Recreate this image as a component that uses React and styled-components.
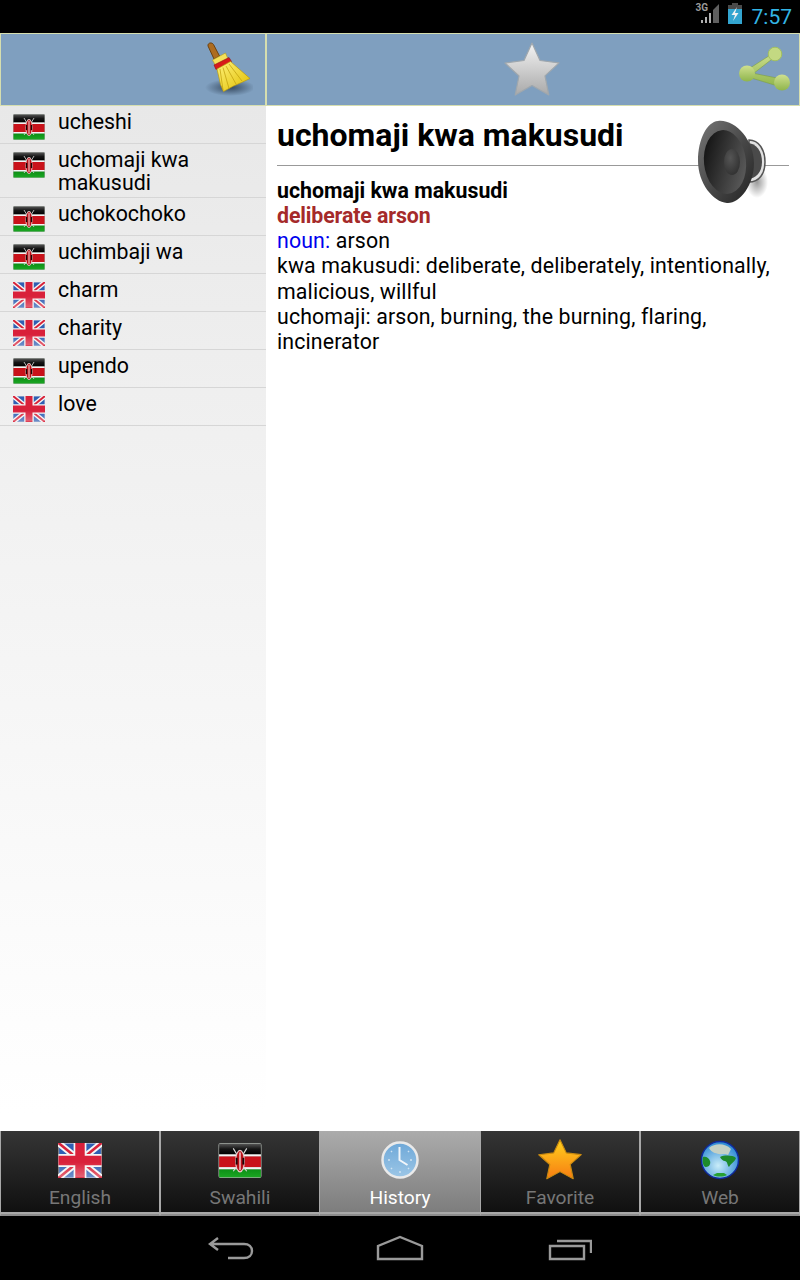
import React from "react";
import styled, { createGlobalStyle } from "styled-components";

const Global = createGlobalStyle`
  html, body { margin: 0; padding: 0; background: #fff; }
  * { box-sizing: border-box; }
`;

const Page = styled.div`
  width: 800px;
  height: 1280px;
  display: flex;
  flex-direction: column;
  overflow: hidden;
  font-family: Roboto, "Liberation Sans", sans-serif;
  color: #000;
  background: #fff;
`;

const StatusBar = styled.div`
  height: 33px;
  flex: none;
  background: #000;
  display: flex;
  justify-content: flex-end;
  align-items: center;
  padding-right: 8px;
`;
const Clock = styled.span`
  color: #33b5e5;
  font-size: 21px;
  line-height: 33px;
  margin-left: 9px;
  padding-top: 2px;
`;
const ThreeG = styled.span`
  font-size: 10px;
  font-weight: 700;
  color: #9a9a9a;
  position: absolute;
  left: -4px;
  top: -1px;
`;
const SignalWrap = styled.div`
  position: relative;
  width: 20px;
  height: 21px;
  margin-top: -6px;
  margin-right: 7px;
`;
const BatterySlot = styled.div`
  margin-top: -6px;
`;

const Main = styled.div`
  flex: 1;
  display: flex;
  min-height: 0;
`;
const Sidebar = styled.aside`
  width: 266px;
  flex: none;
  display: flex;
  flex-direction: column;
  background: linear-gradient(#e8e8e8 73px, #f0f0f0 400px, #ffffff 1080px);
`;
const Bar = styled.div`
  height: 73px;
  flex: none;
  background: #7f9fbf;
  border: 1px solid #d6deaf;
  display: flex;
  align-items: center;
  justify-content: flex-end;
  position: relative;
  padding-right: ${(p) => p.$pr || 0}px;
`;
const FavButton = styled.div`
  position: absolute;
  left: 237px;
  top: 8px;
`;
const Row = styled.div`
  display: flex;
  align-items: flex-start;
  min-height: 38px;
  padding: 4px 0 3px 13px;
  border-bottom: 1px solid #d6d6d6;
`;
const RowFlag = styled.div`
  width: 32px;
  height: 26px;
  margin-top: 4px;
  margin-right: 13px;
  flex: none;
`;
const RowText = styled.div`
  font-size: 21.33px;
  line-height: 23px;
  width: 170px;
`;

const Content = styled.section`
  flex: 1;
  display: flex;
  flex-direction: column;
  min-width: 0;
`;
const Article = styled.div`
  padding: 0 11px;
  position: relative;
`;
const Title = styled.h1`
  margin: 0;
  font-size: 32px;
  font-weight: 700;
  line-height: 38px;
  padding: 10px 0 11px;
  border-bottom: 1px solid #999;
`;
const Speaker = styled.div`
  position: absolute;
  left: 431px;
  top: 14px;
`;
const Lines = styled.div`
  padding-top: 11.6px;
  font-size: 21.33px;
  line-height: 25.3px;
`;
const Strong = styled.div`
  font-weight: 700;
  color: ${(p) => p.$color || "#000"};
  letter-spacing: ${(p) => p.$spacing || "0"};
`;
const Plain = styled.div`
  letter-spacing: 0.13px;
`;
const Pos = styled.span`
  color: #0000ee;
`;

const TabBar = styled.nav`
  height: 85px;
  flex: none;
  display: flex;
  background: #000;
`;
const Tab = styled.div`
  width: 160px;
  display: flex;
  flex-direction: column;
  align-items: center;
  border: solid #a8a8a8;
  border-width: ${(p) => (p.$active ? "0 0 2px 0" : "0 1px 2px 1px")};
  border-bottom-color: #8c8c8c;
  box-shadow: inset 0 -2px #a8a8a8;
  background: ${(p) =>
    p.$active
      ? "linear-gradient(#ababab, #7c7c7c)"
      : "linear-gradient(#353535, #0f0f0f)"};
`;
const TabIcon = styled.div`
  height: 42px;
  margin-top: 8px;
  display: flex;
  align-items: center;
  justify-content: center;
`;
const TabLabel = styled.span`
  font-size: 19.2px;
  line-height: 22px;
  margin-top: 6px;
  color: ${(p) => (p.$active ? "#fff" : "#777")};
`;

const NavBar = styled.div`
  height: 64px;
  flex: none;
  background: #000;
  display: flex;
  align-items: center;
  justify-content: center;
  gap: 122px;
`;
const NavIcon = styled.svg`
  display: block;
  fill: none;
  stroke: #9a9a9a;
  stroke-width: 2.4;
`;

const Kenya = ({ w = 32, h = 26 }) => (
  <svg width={w} height={h} viewBox="0 0 32 26" style={{ display: "block" }}>
    <defs>
      <linearGradient id="keBlack" x1="0" y1="0" x2="0" y2="1">
        <stop offset="0" stopColor="#555" />
        <stop offset="0.5" stopColor="#151515" />
        <stop offset="1" stopColor="#000" />
      </linearGradient>
      <linearGradient id="keGreen" x1="0" y1="0" x2="0" y2="1">
        <stop offset="0" stopColor="#0e8f17" />
        <stop offset="1" stopColor="#1aa722" />
      </linearGradient>
    </defs>
    <rect width="32" height="26" rx="1.5" fill="#a9b0a9" />
    <rect x="0.5" y="0.5" width="31" height="8" fill="url(#keBlack)" />
    <rect x="0.5" y="8.5" width="31" height="1.5" fill="#f4f4f4" />
    <rect x="0.5" y="10" width="31" height="8" fill="#c9121a" />
    <rect x="0.5" y="18" width="31" height="1.6" fill="#f4f4f4" />
    <rect x="0.5" y="19.6" width="31" height="5.9" fill="url(#keGreen)" />
    <path d="M11 4l3 5M21 4l-3 5M11 21l3-4M21 21l-3-4" stroke="#ddd" strokeWidth="0.8" />
    <ellipse cx="16" cy="13.5" rx="3.600" ry="8.500" fill="#e6c9c9" />
    <ellipse cx="16" cy="13.500" rx="2.800" ry="7.500" fill="#b80f16" />
    <rect x="12.800" y="11" width="1.400" height="5" fill="#1c0505" />
    <rect x="17.800" y="11" width="1.400" height="5" fill="#1c0505" />
    <rect x="15.500" y="7" width="1" height="13" fill="#f5dede" />
  </svg>
);

const Union = ({ w = 32, h = 26 }) => (
  <svg width={w} height={h} viewBox="0 0 32 26" style={{ display: "block" }}>
    <defs>
      <linearGradient id="ukSheen" x1="0" y1="0" x2="0" y2="1">
        <stop offset="0.55" stopColor="#fff" stopOpacity="0" />
        <stop offset="1" stopColor="#fff" stopOpacity="0.3" />
      </linearGradient>
    </defs>
    <rect width="32" height="26" rx="1.5" fill="#c6cdd8" />
    <rect x="0.5" y="0.5" width="31" height="25" fill="#2f5fb3" />
    <path d="M0 0L32 26M32 0L0 26" stroke="#f5f5f5" strokeWidth="4.800" />
    <path d="M0 0L32 26M32 0L0 26" stroke="#d8233a" strokeWidth="2" />
    <path d="M16 0V26M0 13H32" stroke="#f5f5f5" strokeWidth="9.500" />
    <path d="M16 0V26M0 13H32" stroke="#d9203a" strokeWidth="7" />
    <rect x="0.5" y="0.5" width="31" height="25" fill="url(#ukSheen)" />
  </svg>
);

const Broom = () => (
  <svg width="50" height="60" viewBox="0 0 50 60" style={{ display: "block" }}>
    <defs>
      <radialGradient id="broomShadow">
        <stop offset="0" stopColor="#233347" stopOpacity="0.8" />
        <stop offset="1" stopColor="#233347" stopOpacity="0" />
      </radialGradient>
      <linearGradient id="bristle" x1="0" y1="0" x2="1" y2="1">
        <stop offset="0" stopColor="#fff27a" />
        <stop offset="1" stopColor="#e0bd00" />
      </linearGradient>
    </defs>
    <ellipse cx="27" cy="47.500" rx="25" ry="8.500" fill="url(#broomShadow)" />
    <path d="M5 6C4.500 2.500 9 2 10.500 4.500L16.500 16l-5.500 3z" fill="#ad6c1f" stroke="#6d4210" strokeWidth="1" />
    <path d="M9.500 20l13-7 2.500 6-12.500 6.500z" fill="#f5e15a" stroke="#b69b16" strokeWidth="0.6" />
    <path d="M11 25l15-7.500 2.500 4L13 29.500z" fill="#d81a1a" stroke="#8e0f0f" strokeWidth="0.6" />
    <path d="M14 29l13.500-7.500L47 38.500l-8.500 4-8 3.500-10 5.500-3-7z" fill="url(#bristle)" stroke="#bd9c0a" strokeWidth="0.7" />
    <path d="M17 29l3 21M20 27.500l6 21M23 26l10 18M26 24l13 17" stroke="#bd9c0a" strokeWidth="0.7" fill="none" />
  </svg>
);

const STAR = "M28 1l8 17.500 19 2.400-14 13 3.800 19L28 43.500 11.200 53l3.800-19L1 21l19-2.500z";
const GreyStar = () => (
  <svg width="56" height="56" viewBox="0 0 56 56" style={{ display: "block" }}>
    <defs>
      <linearGradient id="greyStar" x1="0" y1="0" x2="0" y2="1">
        <stop offset="0" stopColor="#f4f4f4" />
        <stop offset="1" stopColor="#a9a9a9" />
      </linearGradient>
    </defs>
    <path d={STAR} fill="url(#greyStar)" stroke="#9fa7ad" strokeWidth="1.200" strokeLinejoin="round" />
  </svg>
);
const GoldStar = () => (
  <svg width="44" height="42" viewBox="0 0 56 56" preserveAspectRatio="none" style={{ display: "block" }}>
    <defs>
      <linearGradient id="goldStar" x1="0" y1="0" x2="0" y2="1">
        <stop offset="0" stopColor="#ffd21e" />
        <stop offset="1" stopColor="#f77c12" />
      </linearGradient>
    </defs>
    <path d={STAR} fill="url(#goldStar)" stroke="#c98a10" strokeWidth="1.500" strokeLinejoin="round" />
  </svg>
);

const Share = () => (
  <svg width="56" height="48" viewBox="0 0 56 48" style={{ display: "block" }}>
    <defs>
      <linearGradient id="lime" x1="0" y1="0" x2="0" y2="1">
        <stop offset="0" stopColor="#cfe08f" />
        <stop offset="1" stopColor="#8fb54c" />
      </linearGradient>
    </defs>
    <path d="M13 24L41 6 42 10 15 31zM13 26L48 33 47 41 14 31z" fill="url(#lime)" stroke="#7d9f43" strokeWidth="0.6" />
    <circle cx="41" cy="8" r="6.800" fill="#c3d982" stroke="#a3c05f" />
    <circle cx="13" cy="27.500" r="8" fill="url(#lime)" />
    <circle cx="48" cy="36.500" r="8" fill="url(#lime)" />
  </svg>
);

const SpeakerIcon = () => (
  <svg width="72" height="84" viewBox="0 0 72 84" style={{ display: "block" }}>
    <defs>
      <linearGradient id="spkRim" x1="0" y1="0" x2="1" y2="1">
        <stop offset="0" stopColor="#777" />
        <stop offset="0.5" stopColor="#4a4a4a" />
        <stop offset="1" stopColor="#222" />
      </linearGradient>
      <linearGradient id="spkCone" x1="0" y1="0" x2="1" y2="0.6">
        <stop offset="0" stopColor="#0a0a0a" />
        <stop offset="1" stopColor="#575757" />
      </linearGradient>
      <radialGradient id="spkDome" cx="0.4" cy="0.35" r="0.8">
        <stop offset="0" stopColor="#555" />
        <stop offset="1" stopColor="#2c2c2c" />
      </radialGradient>
      <radialGradient id="spkShadow">
        <stop offset="0" stopColor="#000" stopOpacity="0.4" />
        <stop offset="1" stopColor="#000" stopOpacity="0" />
      </radialGradient>
    </defs>
    <ellipse cx="60" cy="62" rx="11" ry="16" fill="url(#spkShadow)" />
    <path d="M52 20C62 20 68 30 68 42 68 54 62 62 52 62z" fill="#e2e2e2" stroke="#555" strokeWidth="1.500" />
    <path d="M50 23C60 23 65 32 65 42 65 52 59 59 50 59z" fill="#4a4a4a" />
    <path d="M21 1C38-1 57 20 57 43 57 66 42 84 30 83 16 82 1 63 1 41 1 19 10 2 21 1z" fill="url(#spkRim)" />
    <ellipse cx="28" cy="42" rx="21" ry="32" fill="url(#spkCone)" transform="rotate(-6 28 42)" />
    <ellipse cx="35" cy="42" rx="8" ry="13" fill="url(#spkDome)" />
  </svg>
);

const ClockIcon = () => (
  <svg width="40" height="40" viewBox="0 0 40 40" style={{ display: "block" }}>
    <defs>
      <linearGradient id="clockFace" x1="0" y1="0" x2="0" y2="1">
        <stop offset="0" stopColor="#6ea8d8" />
        <stop offset="1" stopColor="#9cc6e6" />
      </linearGradient>
    </defs>
    <circle cx="20" cy="20" r="17.500" fill="url(#clockFace)" stroke="#eaeaea" strokeWidth="2.500" />
    <path d="M19.500 7V20L27.500 25" stroke="#f2f6fa" strokeWidth="2" fill="none" />
    <path d="M20 31v2M8 20h2M30 20h2M11 11l1 1M28 11l1 1M11 28l1 1M28 28l1 1" stroke="#cfe3f2" strokeWidth="1.500" />
  </svg>
);

const Globe = () => (
  <svg width="40" height="40" viewBox="0 0 40 40" style={{ display: "block" }}>
    <defs>
      <radialGradient id="globeSea" cx="0.45" cy="0.65" r="0.7">
        <stop offset="0" stopColor="#c9ecf8" />
        <stop offset="1" stopColor="#1c7fd0" />
      </radialGradient>
    </defs>
    <circle cx="20" cy="20" r="18.500" fill="url(#globeSea)" stroke="#0f2a9c" strokeWidth="1.500" />
    <path d="M9 8c6-5 16-5 22 1l-3 6c-4-2-6 0-9-1-4-1-7-1-10-6z" fill="#c4d0c4" />
    <path d="M3 17c3-1 6 1 7 4s-1 6-4 6-4-6-3-10zM20 17c4-2 13-2 16 1-1 4-5 5-7 9-2-2-1-5-4-6-2 0-4-2-5-4z" fill="#1d8a2b" />
    <path d="M13 35c4 2 10 2 14 0l-3-2h-7z" fill="#27a033" />
  </svg>
);

const Signal = () => (
  <svg width="20" height="21" viewBox="0 0 20 21" style={{ display: "block" }}>
    <path d="M1 20h2v-3H1zM5 20h2v-6H5zM9 20h2V10H9z" fill="#b0b0b0" />
    <path d="M13 20h6V1l-6 6z" fill="#5f5f5f" />
  </svg>
);
const Battery = () => (
  <svg width="16" height="21" viewBox="0 0 16 21" style={{ display: "block" }}>
    <path d="M5 0h6v2h4v19H1V2h4z" fill="#4a4a4a" />
    <rect x="1" y="6" width="14" height="15" fill="#33a5d0" />
    <path d="M10 4L4.500 12H8l-2 6 5.500-8H8z" fill="#f2f2f2" />
  </svg>
);

const history = [
  { flag: "ke", text: "ucheshi" },
  { flag: "ke", text: "uchomaji kwa makusudi" },
  { flag: "ke", text: "uchokochoko" },
  { flag: "ke", text: "uchimbaji wa" },
  { flag: "uk", text: "charm" },
  { flag: "uk", text: "charity" },
  { flag: "ke", text: "upendo" },
  { flag: "uk", text: "love" },
];

const tabs = [
  { label: "English", icon: <Union w={44} h={35} /> },
  { label: "Swahili", icon: <Kenya w={44} h={35} /> },
  { label: "History", icon: <ClockIcon />, active: true },
  { label: "Favorite", icon: <GoldStar /> },
  { label: "Web", icon: <Globe /> },
];

export default function App() {
  return (
    <Page>
      <Global />
      <StatusBar>
        <SignalWrap>
          <ThreeG>3G</ThreeG>
          <Signal />
        </SignalWrap>
        <BatterySlot>
          <Battery />
        </BatterySlot>
        <Clock>7:57</Clock>
      </StatusBar>
      <Main>
        <Sidebar>
          <Bar $pr={12}>
            <Broom />
          </Bar>
          {history.map((h) => (
            <Row key={h.text}>
              <RowFlag>{h.flag === "ke" ? <Kenya /> : <Union />}</RowFlag>
              <RowText>{h.text}</RowText>
            </Row>
          ))}
        </Sidebar>
        <Content>
          <Bar $pr={9}>
            <FavButton>
              <GreyStar />
            </FavButton>
            <Share />
          </Bar>
          <Article>
            <Title>uchomaji kwa makusudi</Title>
            <Speaker>
              <SpeakerIcon />
            </Speaker>
            <Lines>
              <Strong>uchomaji kwa makusudi</Strong>
              <Strong $color="#a52a2a" $spacing="-0.12px">deliberate arson</Strong>
              <Plain>
                <Pos>noun:</Pos> arson
              </Plain>
              <Plain>kwa makusudi: deliberate, deliberately, intentionally, malicious, willful</Plain>
              <Plain>uchomaji: arson, burning, the burning, flaring, incinerator</Plain>
            </Lines>
          </Article>
        </Content>
      </Main>
      <TabBar>
        {tabs.map((t) => (
          <Tab key={t.label} $active={t.active}>
            <TabIcon>{t.icon}</TabIcon>
            <TabLabel $active={t.active}>{t.label}</TabLabel>
          </Tab>
        ))}
      </TabBar>
      <NavBar>
        <NavIcon width="46" height="26" viewBox="0 0 46 26">
          <path d="M10 3L2 9l8 6M2 9h34c5 0 8 3 8 7s-3 7-8 7H20" />
        </NavIcon>
        <NavIcon width="48" height="26" viewBox="0 0 48 26">
          <path d="M2 24V11L24 2l22 9v13z" />
        </NavIcon>
        <NavIcon width="46" height="26" viewBox="0 0 46 26">
          <path d="M4 11h34v13H4zM11 6h34v12" />
        </NavIcon>
      </NavBar>
    </Page>
  );
}
